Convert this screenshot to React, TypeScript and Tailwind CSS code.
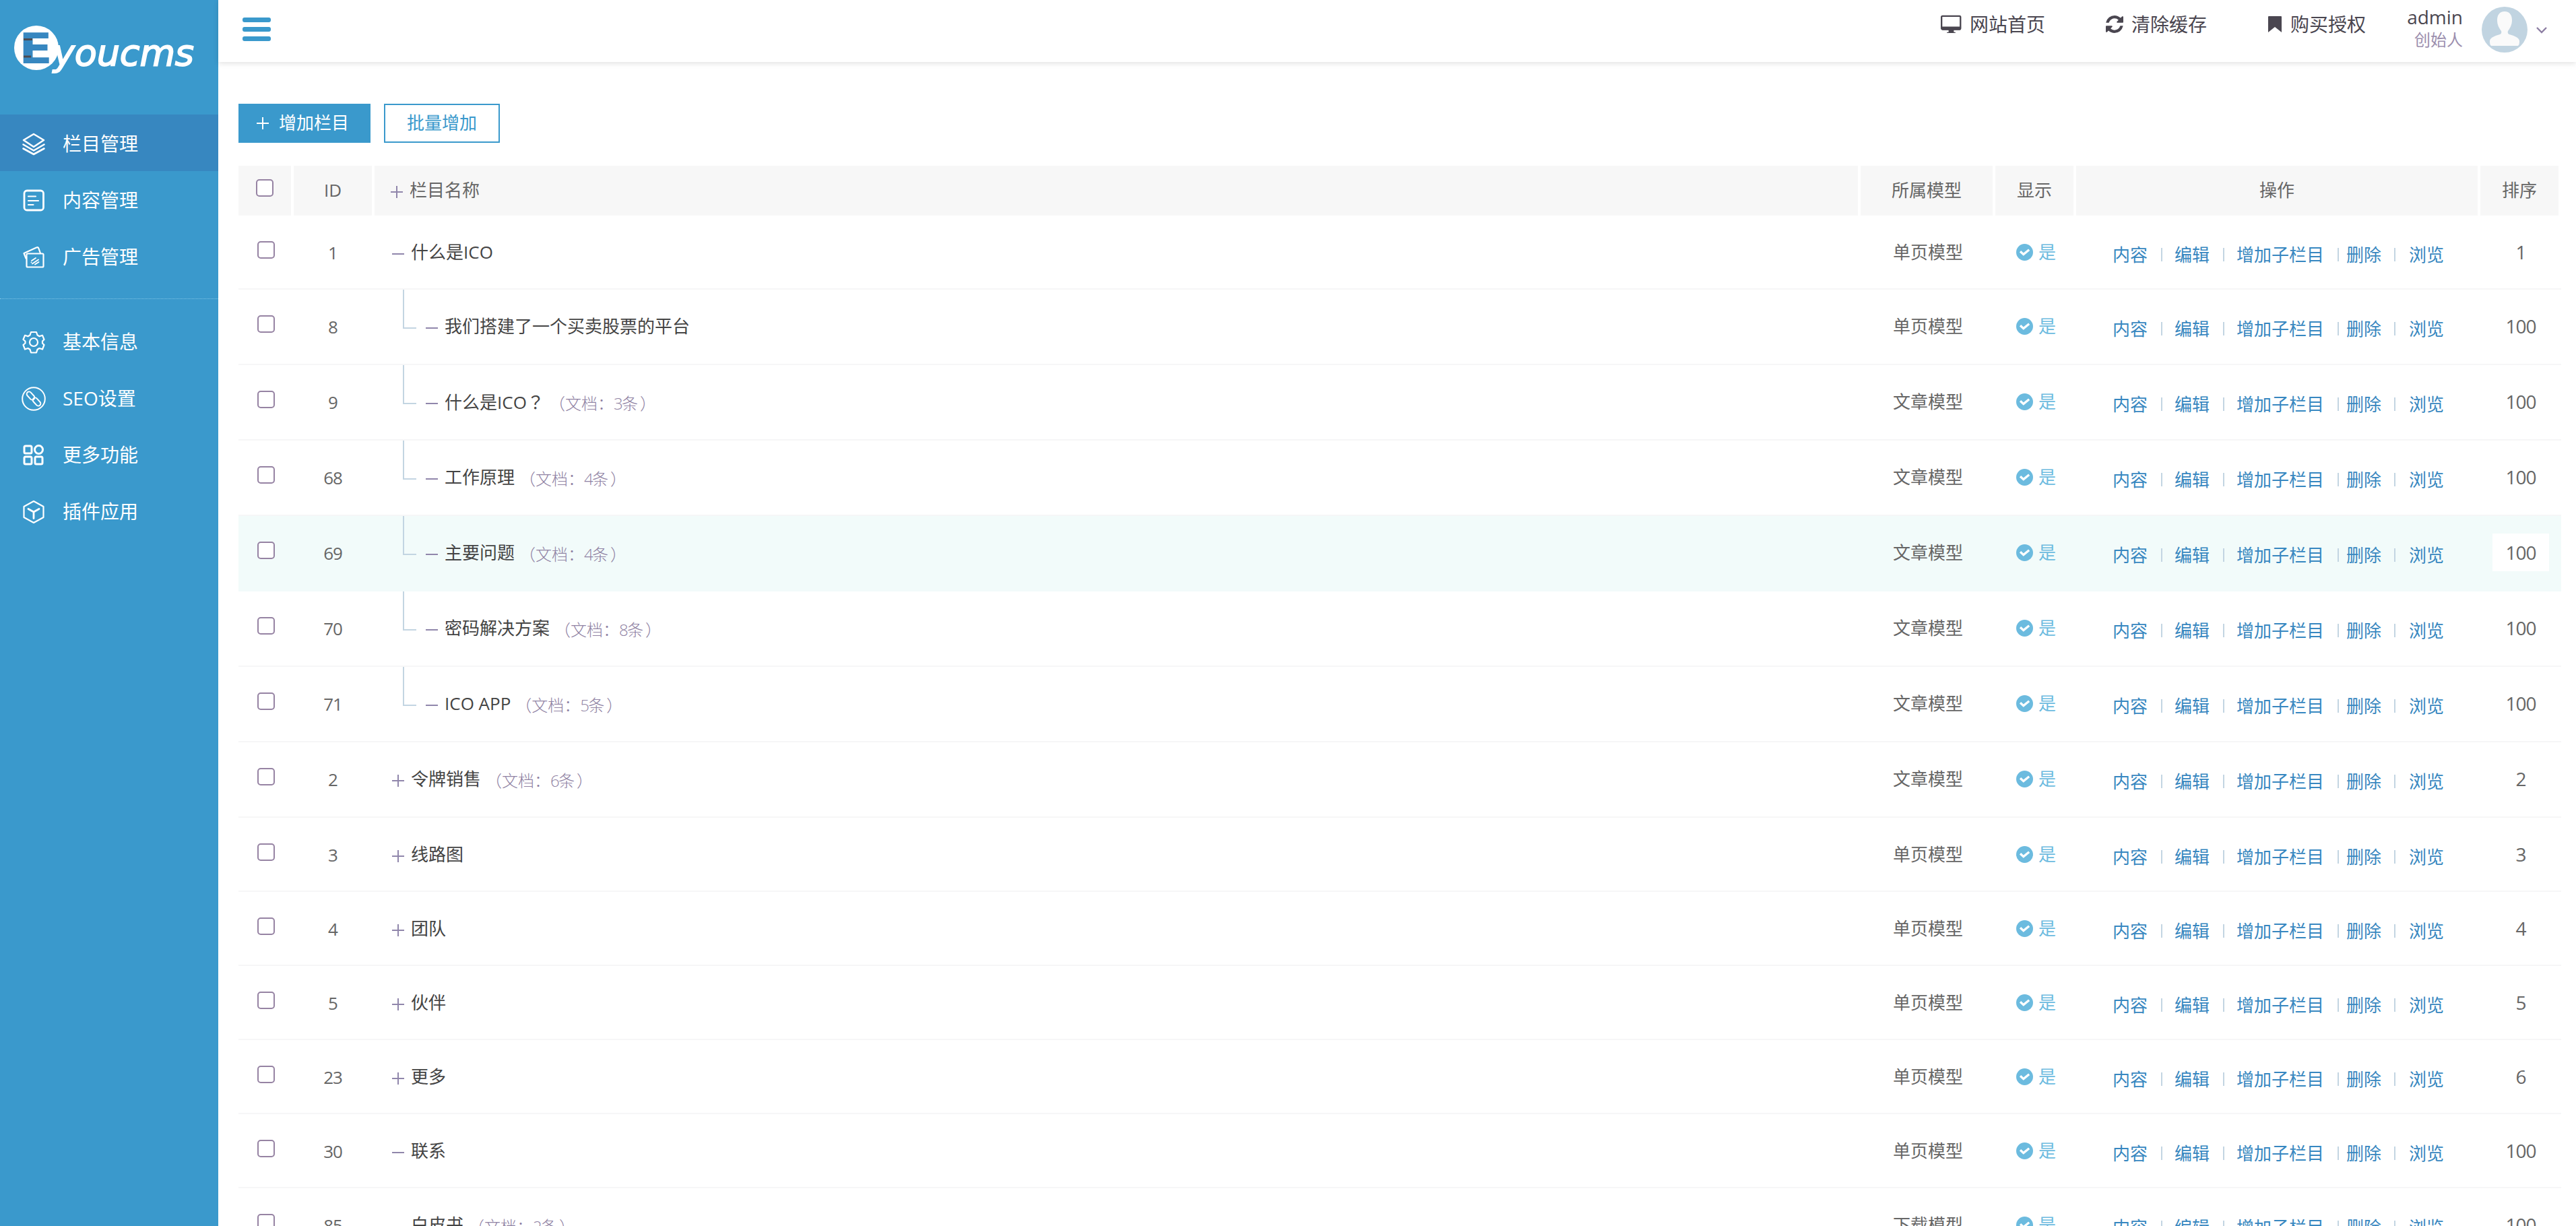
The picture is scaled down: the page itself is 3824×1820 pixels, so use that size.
import React from "react";

type Row = {
  id: number;
  name: string;
  child?: boolean;
  open?: boolean;
  docs?: number;
  model: string;
  sort: number;
  tall?: boolean;
  active?: boolean;
};

const rows: Row[] = [
  { id: 1, name: "什么是ICO", open: true, model: "单页模型", sort: 1 },
  { id: 8, name: "我们搭建了一个买卖股票的平台", child: true, open: true, model: "单页模型", sort: 100, tall: true },
  { id: 9, name: "什么是ICO？", child: true, open: true, docs: 3, model: "文章模型", sort: 100, tall: true },
  { id: 68, name: "工作原理", child: true, open: true, docs: 4, model: "文章模型", sort: 100, tall: true },
  { id: 69, name: "主要问题", child: true, open: true, docs: 4, model: "文章模型", sort: 100, tall: true, active: true },
  { id: 70, name: "密码解决方案", child: true, open: true, docs: 8, model: "文章模型", sort: 100, tall: true },
  { id: 71, name: "ICO APP", child: true, open: true, docs: 5, model: "文章模型", sort: 100, tall: true },
  { id: 2, name: "令牌销售", docs: 6, model: "文章模型", sort: 2, tall: true },
  { id: 3, name: "线路图", model: "单页模型", sort: 3 },
  { id: 4, name: "团队", model: "单页模型", sort: 4 },
  { id: 5, name: "伙伴", model: "单页模型", sort: 5 },
  { id: 23, name: "更多", model: "单页模型", sort: 6 },
  { id: 30, name: "联系", open: true, model: "单页模型", sort: 100 },
  { id: 85, name: "白皮书", open: true, docs: 2, model: "下载模型", sort: 100 },
];

const COLS = "grid grid-cols-[82px_120px_2206px_200px_120px_600px_120px]";

function PlusMinus({ minus, className = "" }: { minus?: boolean; className?: string }) {
  return (
    <svg width="18" height="18" viewBox="0 0 18 18" className={`shrink-0 ${className}`} stroke="currentColor" strokeWidth="2">
      <path d={minus ? "M0 9H18" : "M0 9H18M9 0V18"} />
    </svg>
  );
}

function Check() {
  return <span className="block size-[26px] shrink-0 rounded-[5px] border-2 border-[#9683a3] bg-white" />;
}

function Docs({ n }: { n: number }) {
  return (
    <span className="ml-[7px] mt-[3px] flex text-[24px] font-light text-[#8f82a3]">
      （文档：<span className="w-3 text-center tracking-[-1.5px]">{n}</span>条<span className="pl-[3px]">）</span>
    </span>
  );
}

function Sep() {
  return <span className="h-5 w-0.5 shrink-0 bg-[#c3d5e2]" />;
}

function TableRow({ r }: { r: Row }) {
  const question = r.name.endsWith("？");
  return (
    <div
      className={`${COLS} w-[3448px] items-start border-b-2 ${r.tall ? "h-[112px]" : "h-[110px]"} ${
        r.active ? "border-[#f2fafa] bg-[#f2fbfa]" : "border-[#f6f6f7]"
      }`}
    >
      <div className="pl-7 pt-[38px]">
        <Check />
      </div>
      <div className="h-[108px] pr-1 pt-px text-center leading-[108px] tracking-[-1px] text-[#666]">{r.id}</div>
      <div className="flex h-[108px] items-start leading-[108px]">
        {r.child ? (
          <>
            <span className="ml-[42px] h-[58px] w-5 shrink-0 border-b-2 border-l-2 border-[#c3d5e2]" />
            <PlusMinus minus className="ml-[14px] mt-12 text-[#9086ab]" />
          </>
        ) : (
          <PlusMinus minus={r.open} className="ml-[26px] mt-12 text-[#9086ab]" />
        )}
        <span className="ml-2.5 text-[#444]">
          {question ? r.name.slice(0, -1) : r.name}
          {question && <span className="font-['Noto_Sans_CJK_TC',sans-serif]">？</span>}
        </span>
        {r.docs && <Docs n={r.docs} />}
      </div>
      <div className="pl-12 leading-[108px] text-[#666]">{r.model}</div>
      <div className="flex h-[108px] items-center gap-2 pl-[31px] text-[#6cbbdf]">
        <svg width="25" height="25" viewBox="0 0 24 24">
          <circle cx="12" cy="12" r="12" fill="currentColor" />
          <path d="M5.800 10.800l4.600 4.200 8-6.600" fill="none" stroke="#fff" strokeWidth="3.200" />
        </svg>
        是
      </div>
      <div className="flex h-[116px] items-center pl-[54px] text-[#3787c0]">
        <span className="mr-5">内容</span>
        <Sep />
        <span className="mx-[18px]">编辑</span>
        <span className="w-0.5" />
        <Sep />
        <span className="mx-[18px]">增加子栏目</span>
        <span className="w-0.5" />
        <Sep />
        <span className="ml-[11px] mr-[19px]">删除</span>
        <Sep />
        <span className="ml-5">浏览</span>
      </div>
      <div className="ml-[18px] mt-[26px] h-14 w-[84px] bg-white text-center text-[28px] leading-[56px] tracking-[-1px] text-[#666]">
        {r.sort}
      </div>
    </div>
  );
}

const ic = {
  width: 36,
  height: 36,
  viewBox: "0 0 36 36",
  fill: "none",
  stroke: "currentColor",
  strokeWidth: 2.2,
  strokeLinejoin: "round" as const,
  strokeLinecap: "round" as const,
};

const icons: Record<string, React.ReactNode> = {
  layers: (
    <svg {...ic} strokeWidth="2.600">
      <path d="M18 3L33 12 18 22 3 12z" />
      <path d="M2.500 18.500L18 27.500 33.500 18.500M2.500 24.500L18 33 33.500 24.500" />
    </svg>
  ),
  doc: (
    <svg {...ic}>
      <rect x="4" y="3" width="28.500" height="29" rx="4" strokeWidth="2.800" />
      <path d="M10 11.500h11M10 18h15M10 24h7.500" />
    </svg>
  ),
  ad: (
    <svg {...ic}>
      <rect x="7.500" y="12.500" width="25" height="20" rx="1.500" />
      <path d="M6.500 19.500L3.500 12 22 3.500c2-1 3 0 3.500 1.500l2.500 7" />
      <path d="M15 23l6-4M14.500 25.500h0M16 27.500l9-6M20 28.500l5.500-3.500" strokeWidth="1.900" />
    </svg>
  ),
  gear: (
    <svg {...ic}>
      <circle cx="18" cy="18" r="6" />
      <path d="M14 3h8l1.500 4.500 3 1.800 4.500-1.500 2.500 6.200-2.500 2.500v3l2.500 2.500-2.500 6.500-4.500-1.500-3 1.800L22 33.500h-8l-1.500-4.700-3-1.800L5 28.500 2.500 22 5.500 19.500v-3L2.500 14 5 7.800l4.500 1.500 3-1.800z" />
    </svg>
  ),
  link: (
    <svg {...ic}>
      <circle cx="18" cy="18" r="16.800" strokeWidth="2" />
      <rect x="-7" y="-3.500" width="14" height="7" rx="3.500" transform="translate(13.500 13.500) rotate(48)" strokeWidth="1.900" />
      <rect x="-7" y="-3.500" width="14" height="7" rx="3.500" transform="translate(22.500 22.500) rotate(48)" strokeWidth="1.900" />
    </svg>
  ),
  grid: (
    <svg {...ic} strokeWidth="3">
      <rect x="4" y="4" width="11" height="11" rx="2" />
      <circle cx="25.500" cy="9.500" r="6" />
      <rect x="4" y="20" width="11" height="11" rx="2" />
      <rect x="20" y="20" width="11" height="11" rx="2" />
    </svg>
  ),
  cube: (
    <svg {...ic}>
      <path d="M18 2L32.500 10v16L18 34 3.500 26V10z" />
      <path d="M10 13.500l8 4.500 8-4.500M18 18v9.500" strokeWidth="2.800" />
    </svg>
  ),
};

function NavItem({ icon, label, active }: { icon: string; label: string; active?: boolean }) {
  return (
    <div className={`flex h-[84px] items-center gap-[25px] pl-8 pt-[3px] text-[28px] text-white ${active ? "bg-[#3787c0]" : ""}`}>
      {icons[icon]}
      <span className="-mt-px">{label}</span>
    </div>
  );
}

function Logo() {
  return (
    <svg width="324" height="140" viewBox="0 0 324 140" className="block">
      <circle cx="54" cy="71" r="33" fill="#fff" />
      <text x="28" y="94" fontFamily="DejaVu Sans, sans-serif" fontSize="62" fontWeight="700" fill="#3787c0" textLength="50" lengthAdjust="spacingAndGlyphs">
        E
      </text>
      <path d="M35 58.500h13M35 84h11" stroke="#4a4a50" strokeWidth="3" />
      <text x="79" y="97" fontFamily="DejaVu Sans, sans-serif" fontSize="54" fontStyle="italic" fill="#fff" stroke="#fff" strokeWidth="1.800" textLength="209">
        youcms
      </text>
    </svg>
  );
}

function Sidebar() {
  return (
    <aside className="h-[1820px] w-[324px] shrink-0 bg-[#3a99cc]">
      <div className="h-[170px]">
        <Logo />
      </div>
      <NavItem icon="layers" label="栏目管理" active />
      <NavItem icon="doc" label="内容管理" />
      <NavItem icon="ad" label="广告管理" />
      <div className="mb-[20px] mt-5 h-[2px] border-b border-dotted border-[#7fc4e6]" />
      <NavItem icon="gear" label="基本信息" />
      <NavItem icon="link" label="SEO设置" />
      <NavItem icon="grid" label="更多功能" />
      <NavItem icon="cube" label="插件应用" />
    </aside>
  );
}

function TopBar() {
  return (
    <header className="flex h-[92px] shrink-0 items-start bg-white text-[28px] text-[#4a4650] shadow-[0_2px_8px_rgba(0,0,0,0.12)]">
      <div className="ml-9 mt-[26px] flex flex-col gap-[7px]">
        <span className="h-[7px] w-[42px] rounded-[3px] bg-[#3a99cc]" />
        <span className="h-[7px] w-[42px] rounded-[3px] bg-[#3a99cc]" />
        <span className="h-[7px] w-[42px] rounded-[3px] bg-[#3a99cc]" />
      </div>
      <div className="ml-auto flex h-[72px] items-center">
        <svg width="31" height="28" viewBox="0 0 32 28" className="mr-3">
          <rect x="1.200" y="1.500" width="29" height="20" rx="1.500" fill="none" stroke="currentColor" strokeWidth="2.400" />
          <path d="M1 17.500h30V21a2 2 0 0 1-2 2H3a2 2 0 0 1-2-2zM12 23h8v3h2.500v1.500h-13V26H12z" fill="currentColor" />
        </svg>
        <span className="w-[112px]">网站首页</span>
        <svg width="26" height="26" viewBox="0 0 1536 1536" className="ml-[90px] mr-3" fill="currentColor">
          <path d="M1511 928q0 5-1 7-64 268-268 434.500T764 1536q-146 0-282.500-55T238 1324l-129 129q-19 19-45 19t-45-19-19-45V960q0-26 19-45t45-19h448q26 0 45 19t19 45-19 45l-137 137q71 66 161 102t187 36q134 0 250-65t186-179q11-17 53-117 8-23 30-23h192q13 0 22.500 9.500t9.500 22.500zm25-800v448q0 26-19 45t-45 19h-448q-26 0-45-19t-19-45 19-45l138-138Q969 256 768 256q-134 0-250 65T332 500q-11 17-53 117-8 23-30 23H50q-13 0-22.500-9.500T18 608v-7q65-268 270-434.500T768 0q146 0 284 55.500T1297 212l130-129q19-19 45-19t45 19 19 45z" />
        </svg>
        <span className="w-[112px]">清除缓存</span>
        <svg width="22" height="26" viewBox="0 0 22 26" className="ml-[90px] mr-3" fill="currentColor">
          <path d="M2 1h18a1 1 0 0 1 1 1v23l-10-8-10 8V2a1 1 0 0 1 1-1z" />
        </svg>
        <span className="w-[112px]">购买授权</span>
      </div>
      <div className="ml-[58px] mt-1.5 flex w-[86px] flex-col items-end">
        <span className="h-9 text-[28px] leading-[38px]">admin</span>
        <span className="text-[24px] leading-[34px] text-[#9c8fae]">创始人</span>
      </div>
      <svg width="68" height="68" viewBox="0 0 68 68" className="ml-7 mt-2.5">
        <circle cx="34" cy="34" r="34" fill="#c1d4e1" />
        <path d="M34 7c8 0 11 6 11 13 0 7-3 12-6 16-1 4 1 5 5 6 7 2 12 5 12 9 0 5-1 7-3 7H15c-2 0-3-2-3-7 0-4 5-7 12-9 4-1 6-2 5-6-3-4-6-9-6-16 0-7 3-13 11-13z" fill="#fafafa" />
      </svg>
      <svg width="16" height="10" viewBox="0 0 16 10" className="ml-[13px] mr-[43px] mt-10" fill="none" stroke="#8d7fa3" strokeWidth="2.400">
        <path d="M1 1l7 7 7-7" />
      </svg>
    </header>
  );
}

function HeadCell({ children, className = "" }: { children: React.ReactNode; className?: string }) {
  return <div className={`mr-1 bg-[#f7f7f7] text-center leading-[72px] ${className}`}>{children}</div>;
}

export default function App() {
  return (
    <div className="flex h-[1820px] w-[3824px] overflow-hidden bg-white font-['Open_Sans','Noto_Sans_CJK_SC',sans-serif] text-[26px] whitespace-nowrap">
      <Sidebar />
      <div className="flex w-[3500px] flex-col">
        <TopBar />
        <main className="shrink-0 pl-[30px] pt-[62px]">
          <div className="flex h-[58px] gap-5">
            <div className="flex w-[196px] items-center bg-[#3a99cc] pl-[27px] text-white">
              <PlusMinus className="mr-[15px]" />
              <span className="-mt-0.5">增加栏目</span>
            </div>
            <div className="w-[172px] border-2 border-[#3a99cc] text-center leading-[52px] text-[#3a99cc]">批量增加</div>
          </div>
          <div className={`${COLS} mt-[34px] h-[74px] w-[3448px] text-[#666]`}>
            <HeadCell className="pl-[26px] pt-5">
              <Check />
            </HeadCell>
            <HeadCell>ID</HeadCell>
            <HeadCell className="flex items-start pl-6">
              <PlusMinus className="mr-2.5 mt-[30px] text-[#9086ab]" />
              栏目名称
            </HeadCell>
            <HeadCell>所属模型</HeadCell>
            <HeadCell>显示</HeadCell>
            <HeadCell>操作</HeadCell>
            <HeadCell>排序</HeadCell>
          </div>
          {rows.map((r) => (
            <TableRow key={r.id} r={r} />
          ))}
        </main>
      </div>
    </div>
  );
}
